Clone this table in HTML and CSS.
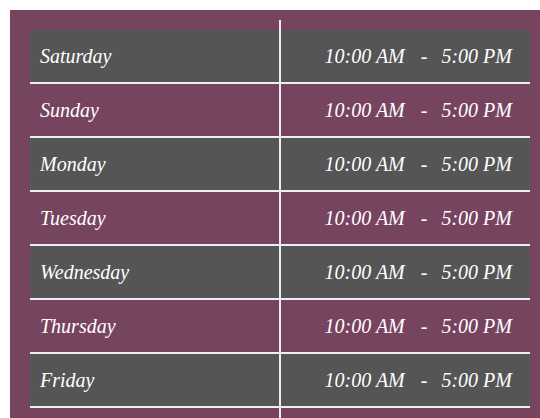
FILE: index.html
```
<!DOCTYPE html>
<html>
<head>
<meta charset="utf-8">
<link rel="stylesheet" href="styles.css">
</head>
<body>
<div class="hours">
  <ul class="list">
    <li class="row dark"><span class="day">Saturday</span><span class="time"><span>10:00 AM</span><span class="dash">-</span><span>5:00 PM</span></span></li>
    <li class="row"><span class="day">Sunday</span><span class="time"><span>10:00 AM</span><span class="dash">-</span><span>5:00 PM</span></span></li>
    <li class="row dark"><span class="day">Monday</span><span class="time"><span>10:00 AM</span><span class="dash">-</span><span>5:00 PM</span></span></li>
    <li class="row"><span class="day">Tuesday</span><span class="time"><span>10:00 AM</span><span class="dash">-</span><span>5:00 PM</span></span></li>
    <li class="row dark"><span class="day">Wednesday</span><span class="time"><span>10:00 AM</span><span class="dash">-</span><span>5:00 PM</span></span></li>
    <li class="row"><span class="day">Thursday</span><span class="time"><span>10:00 AM</span><span class="dash">-</span><span>5:00 PM</span></span></li>
    <li class="row dark"><span class="day">Friday</span><span class="time"><span>10:00 AM</span><span class="dash">-</span><span>5:00 PM</span></span></li>
  </ul>
</div>
</body>
</html>
```
FILE: styles.css
```
html, body {
  margin: 0;
  padding: 0;
  background: #ffffff;
  overflow: hidden;
}
body {
  padding: 10px 0 0 10px;
  font-family: "Liberation Serif", "Times New Roman", serif;
}
.hours {
  position: relative;
  background: #774460;
  padding: 20px 10px 10px 20px;
}
.hours::after {
  content: "";
  position: absolute;
  top: 10px;
  bottom: 0;
  left: 269px;
  width: 2px;
  background: #eeeeee;
}
.list {
  list-style: none;
  margin: 0;
  padding: 0;
}
.row {
  display: flex;
  height: 52px;
  align-items: center;
  border-bottom: 2px solid #eeeeee;
  color: #ffffff;
  font-style: italic;
  font-size: 20px;
}
.row.dark {
  background: #555555;
}
.day {
  width: 249px;
  padding-left: 10px;
  box-sizing: border-box;
}
.time {
  flex: 1;
  display: flex;
  justify-content: flex-end;
  padding-right: 18px;
}
.dash {
  margin: 0 14px 0 16px;
}
```
